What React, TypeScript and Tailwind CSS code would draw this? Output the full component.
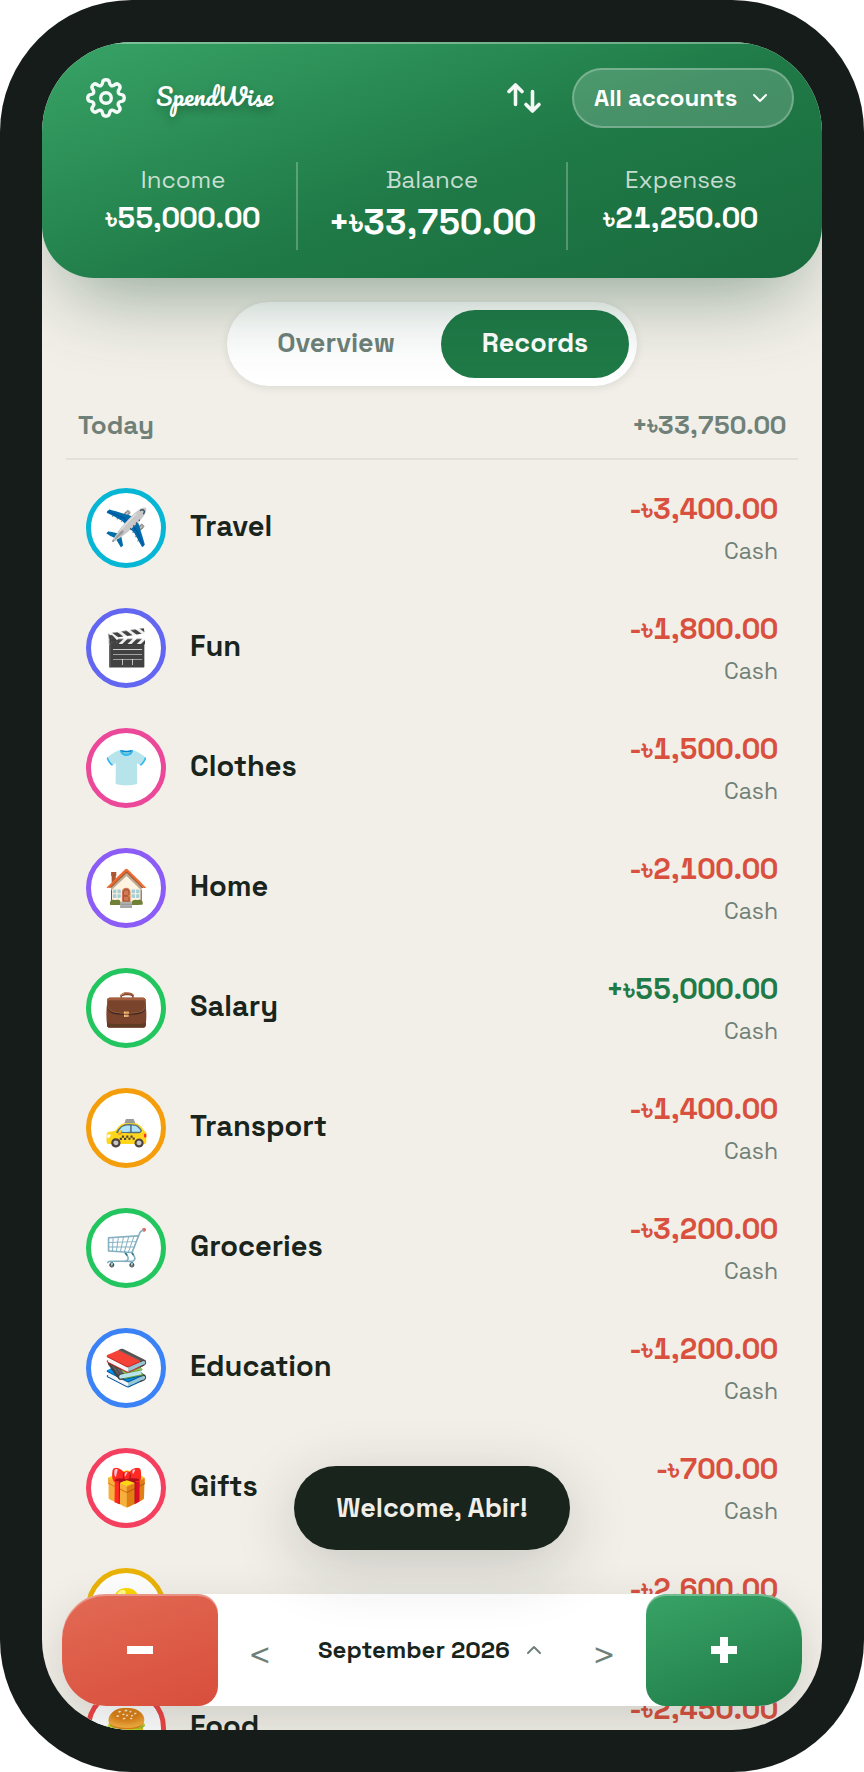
import { ChevronDown, ChevronUp } from "lucide-react";

const records = [
  { name: "Travel", icon: "✈️", sign: "-", amount: "3,400.00", ring: "border-[#06b6d4]" },
  { name: "Fun", icon: "🎬", sign: "-", amount: "1,800.00", ring: "border-[#6366f1]" },
  { name: "Clothes", icon: "👕", sign: "-", amount: "1,500.00", ring: "border-[#ec4899]" },
  { name: "Home", icon: "🏠", sign: "-", amount: "2,100.00", ring: "border-[#8b5cf6]" },
  { name: "Salary", icon: "💼", sign: "+", amount: "55,000.00", ring: "border-[#22c55e]" },
  { name: "Transport", icon: "🚕", sign: "-", amount: "1,400.00", ring: "border-[#f59e0b]" },
  { name: "Groceries", icon: "🛒", sign: "-", amount: "3,200.00", ring: "border-[#22c55e]" },
  { name: "Education", icon: "📚", sign: "-", amount: "1,200.00", ring: "border-[#3b82f6]" },
  { name: "Gifts", icon: "🎁", sign: "-", amount: "700.00", ring: "border-[#f43f5e]" },
  { name: "Bills", icon: "💡", sign: "-", amount: "2,600.00", ring: "border-[#eab308]" },
  { name: "Food", icon: "🍔", sign: "-", amount: "2,450.00", ring: "border-[#ef4444]" },
];

function Money({ sign = "", amount }: { sign?: string; amount: string }) {
  return (
    <>
      {sign}
      <span className="font-['FreeSans',sans-serif]">৳</span>
      {amount}
    </>
  );
}

function GearIcon() {
  return (
    <svg viewBox="0 0 40 40" className="size-10" fill="none" stroke="currentColor" strokeWidth="3.4" strokeLinejoin="round">
      <circle cx="20" cy="20" r="5.3" />
      <path d="M16.6 4.400c.5-3.500 6.300-3.500 6.800 0 .3 3.400 2.600 4.300 4.700 2.700 3.800-3.100 7.900 1 4.800 4.800-1.600 2.100-.7 4.400 2.700 4.700 3.500.5 3.500 6.300 0 6.800-3.400.3-4.300 2.600-2.700 4.700 3.100 3.800-1 7.900-4.800 4.800-2.100-1.600-4.400-.7-4.700 2.700-.5 3.500-6.300 3.500-6.800 0-.3-3.400-2.600-4.300-4.700-2.700-3.800 3.100-7.900-1-4.800-4.800 1.600-2.100.7-4.400-2.700-4.700-3.500-.5-3.500-6.300 0-6.800 3.400-.3 4.300-2.600 2.700-4.700-3.100-3.800 1-7.900 4.800-4.800 2.100 1.600 4.400.7 4.700-2.700Z" />
    </svg>
  );
}

function SwapIcon() {
  return (
    <svg viewBox="0 0 40 40" className="size-10" fill="none" stroke="currentColor" strokeWidth="3.6" strokeLinecap="round" strokeLinejoin="round">
      <path d="M11.500 26.500V7M5 13.500l6.500-6.500 6.500 6.500" />
      <path d="M28.500 13.500V33M22 26.500l6.500 6.500 6.500-6.500" />
    </svg>
  );
}

function Header() {
  return (
    <header className="relative z-10 shrink-0 rounded-b-[52px] bg-[linear-gradient(160deg,#38a366_0%,#1f7a47_55%,#1a6a3d_100%)] px-7 pt-[26px] pb-7 text-white shadow-[inset_0_2px_0_rgba(255,255,255,0.35),0_36px_80px_-24px_rgba(22,72,47,0.47)]">
      <div className="flex items-center">
        <button type="button" aria-label="Settings" className="ml-4 text-white/95">
          <GearIcon />
        </button>
        <h1 className="ml-[30px] pb-1 font-['Pacifico',cursive] text-2xl leading-9 [text-shadow:0_4px_8px_rgba(0,0,0,0.25)]">
          SpendWise
        </h1>
        <button type="button" aria-label="Transfer" className="mr-7 ml-auto text-white/95">
          <SwapIcon />
        </button>
        <div className="relative">
          <select
            aria-label="Account"
            className="h-15 w-[222px] appearance-none rounded-full border-2 border-white/25 bg-white/18 pl-5 text-2xl font-semibold"
          >
            <option>All accounts</option>
          </select>
          <ChevronDown className="pointer-events-none absolute top-[18px] right-[22px] size-6" />
        </div>
      </div>

      <dl className="mt-[34px] grid grid-cols-[1fr_1.2fr_1fr] text-center tabular-nums">
        <div className="h-[88px]">
          <dt className="text-2xl leading-9 text-white/75">Income</dt>
          <dd className="text-[29px] leading-10 font-semibold">
            <Money amount="55,000.00" />
          </dd>
        </div>
        <div className="h-[88px] border-x-2 border-white/25">
          <dt className="text-2xl leading-9 text-white/75">Balance</dt>
          <dd className="text-[35px] leading-12 font-semibold">
            <Money sign="+" amount="33,750.00" />
          </dd>
        </div>
        <div className="h-[88px]">
          <dt className="text-2xl leading-9 text-white/75">Expenses</dt>
          <dd className="text-[29px] leading-10 font-semibold">
            <Money amount="21,250.00" />
          </dd>
        </div>
      </dl>
    </header>
  );
}

function Tabs() {
  return (
    <div role="tablist" className="mx-auto mt-6 flex h-[84px] w-[410px] shrink-0 rounded-full bg-white p-2 text-[27px] leading-10 font-semibold shadow-[0_2px_8px_rgba(24,36,28,0.1)]">
      <button type="button" role="tab" aria-selected="false" className="flex-1 rounded-full pr-1 pb-0.5 text-[#6f8078]">
        Overview
      </button>
      <button type="button" role="tab" aria-selected="true" className="w-[188px] rounded-full bg-[#1f7a47] pb-0.5 text-white">
        Records
      </button>
    </div>
  );
}

function RecordRow({ name, icon, sign, amount, ring }: (typeof records)[number]) {
  return (
    <li className="flex h-30 items-center px-5">
      <span className={`flex size-20 items-center justify-center rounded-full border-5 bg-white text-4xl leading-none ${ring}`}>
        {icon}
      </span>
      <span className="ml-6 pb-1 text-[29px] leading-10 font-semibold">{name}</span>
      <span className="ml-auto flex flex-col pt-1 text-right tabular-nums">
        <span className={`text-[29px] leading-10 font-bold ${sign === "+" ? "text-[#1f7a47]" : "text-[#d9503f]"}`}>
          <Money sign={sign} amount={amount} />
        </span>
        <span className="text-[23px] leading-10 text-[#6f8078]">Cash</span>
      </span>
    </li>
  );
}

function BottomBar() {
  return (
    <nav
      aria-label="Month"
      className="absolute inset-x-5 bottom-6 flex h-28 rounded-[44px] bg-white text-[#6f8078] shadow-[0_16px_48px_rgba(24,36,28,0.16)]"
    >
      <button
        type="button"
        aria-label="Add expense"
        className="flex w-39 items-center justify-center rounded-l-[44px] rounded-r-[20px] bg-[linear-gradient(160deg,#e26a54,#d84e3c)] text-white shadow-[inset_0_2px_0_rgba(255,255,255,0.3)]"
      >
        <svg viewBox="0 0 26 26" className="size-[26px]" stroke="currentColor" strokeWidth="8">
          <path d="M0 13h26" />
        </svg>
      </button>
      <button type="button" aria-label="Previous month" className="w-21 pt-1.5 font-['FreeSans',sans-serif] text-[34px] font-medium">
        &lt;
      </button>
      <button type="button" className="flex flex-1 items-center justify-center gap-3 text-2xl font-semibold whitespace-nowrap text-[#18241c]">
        September 2026
        <ChevronUp className="size-6 text-[#6f8078]" />
      </button>
      <button type="button" aria-label="Next month" className="w-21 pt-1.5 font-['FreeSans',sans-serif] text-[34px] font-medium">
        &gt;
      </button>
      <button
        type="button"
        aria-label="Add income"
        className="flex w-39 items-center justify-center rounded-l-[20px] rounded-r-[44px] bg-[linear-gradient(160deg,#38a366,#1f7a47)] text-white shadow-[inset_0_2px_0_rgba(255,255,255,0.3)]"
      >
        <svg viewBox="0 0 26 26" className="size-[26px]" stroke="currentColor" strokeWidth="8">
          <path d="M0 13h26M13 0v26" />
        </svg>
      </button>
    </nav>
  );
}

export default function App() {
  return (
    <div className="h-screen rounded-[132px] bg-[#161c1a] p-[42px] font-['Space_Grotesk','Inter',sans-serif] text-[#18241c]">
      <div className="relative flex h-full flex-col overflow-hidden rounded-[90px] bg-[#f2efe8]">
        <Header />
        <Tabs />
        <section className="mx-6 mt-4">
          <h2 className="flex h-[58px] justify-between border-b-2 border-[#e4e1d6] px-3 text-[26px] leading-[46px] font-semibold text-[#6f8078] tabular-nums">
            <span>Today</span>
            <span>
              <Money sign="+" amount="33,750.00" />
            </span>
          </h2>
          <ul className="pt-2">
            {records.map((record) => (
              <RecordRow key={record.name} {...record} />
            ))}
          </ul>
        </section>
        <BottomBar />
        <div className="pointer-events-none absolute inset-x-0 bottom-45 flex justify-center">
          <p
            role="status"
            className="rounded-full bg-[#18241c] px-[42px] text-[27px] leading-[84px] font-semibold text-[#f1eee7] shadow-[0_16px_64px_rgba(24,36,28,0.2)]"
          >
            Welcome, Abir!
          </p>
        </div>
      </div>
    </div>
  );
}
